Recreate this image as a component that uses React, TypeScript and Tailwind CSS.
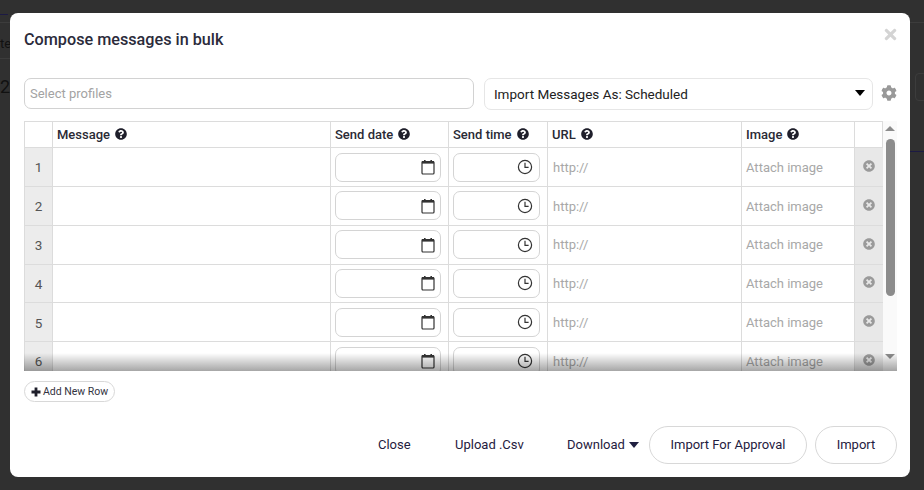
import { FaQuestionCircle, FaCog, FaTimes, FaTimesCircle } from "react-icons/fa";

const font = { fontFamily: 'Roboto, "Noto Sans", "Liberation Sans", sans-serif' };

function Help() {
  return <FaQuestionCircle className="ml-[5px] w-[12px] h-[12px] text-[#1f1f2b] -translate-y-[1px]" />;
}

function Caret({ className = "" }: { className?: string }) {
  return <span className={`inline-block w-0 h-0 border-x-[5px] border-x-transparent border-t-[6px] border-t-current ${className}`} />;
}

function Plus() {
  return (
    <svg width="10" height="10" viewBox="0 0 10 10" className="shrink-0 mr-[2px]">
      <path d="M3.6 0.5H6.4V3.6H9.5V6.4H6.4V9.5H3.6V6.4H0.5V3.6H3.6Z" fill="#1f1f2b" />
    </svg>
  );
}

function Calendar() {
  return (
    <svg width="14" height="16" viewBox="0 0 14 16" className="shrink-0">
      <rect x="1" y="2.5" width="12" height="12.5" rx="1" fill="#fff" stroke="#333" strokeWidth="1.2" />
      <rect x="1" y="2" width="12" height="2.6" fill="#333" />
      <rect x="3" y="1" width="1.6" height="2" fill="#333" />
      <rect x="9.4" y="1" width="1.6" height="2" fill="#333" />
    </svg>
  );
}

function Clock() {
  return (
    <svg width="16" height="16" viewBox="0 0 16 16" className="shrink-0">
      <circle cx="8" cy="8" r="6.6" fill="none" stroke="#333" strokeWidth="1.2" />
      <path d="M8 3.8V8.4H11.6" fill="none" stroke="#333" strokeWidth="1.2" />
    </svg>
  );
}

function HeadCell({ w, label }: { w: string; label: string }) {
  return (
    <div className={`${w} shrink-0 h-full border-r border-[#dcdcdc] pl-[4px] flex items-center text-[13px] font-medium text-[#2a2a35] whitespace-nowrap`}>
      {label}
      <Help />
    </div>
  );
}

function Row({ n }: { n: number }) {
  return (
    <div className="flex h-[38.8px] border-b border-[#dcdcdc] shrink-0">
      <div className="w-[28px] shrink-0 bg-[#ececec] border-r border-[#dcdcdc] flex items-center justify-center pt-[1px] text-[13.5px] text-[#555]">{n}</div>
      <div className="w-[278px] shrink-0 border-r border-[#dcdcdc]" />
      <div className="w-[118px] shrink-0 border-r border-[#dcdcdc] pl-[4px] flex items-center">
        <div className="w-[106px] h-[29px] border border-[#d4d4d4] rounded-[7px] flex items-center justify-end pr-[5px]">
          <Calendar />
        </div>
      </div>
      <div className="w-[99px] shrink-0 border-r border-[#dcdcdc] pl-[4px] flex items-center">
        <div className="w-[87px] h-[29px] border border-[#d4d4d4] rounded-[7px] flex items-center justify-end pr-[6px]">
          <Clock />
        </div>
      </div>
      <div className="w-[194px] shrink-0 border-r border-[#dcdcdc] pl-[5px] pt-[1px] flex items-center text-[13px] text-[#a8a8a8]">http://</div>
      <div className="w-[113px] shrink-0 border-r border-[#dcdcdc] pl-[4px] pt-[1px] flex items-center text-[13px] text-[#a8a8a8]">Attach image</div>
      <div className="w-[28px] shrink-0 bg-[#e8e8e8] flex items-center justify-center">
        <FaTimesCircle className="w-[12px] h-[12px] text-[#9a9a9a] -translate-y-[1px]" />
      </div>
    </div>
  );
}

export default function App() {
  return (
    <div className="relative w-[924px] h-[490px] overflow-hidden bg-[#303030] pt-[13px] pl-[10px]" style={font}>
      {/* page dimmed behind the dialog */}
      <div className="absolute left-0 top-[14px] w-[8px] h-px bg-[#1c1a44]" />
      <div className="absolute left-0 top-[22px] w-[10px] h-px bg-[#3c3c3c]" />
      <div className="absolute left-0 top-[58px] w-[10px] h-px bg-[#3c3c3c]" />
      <div className="absolute left-0 top-[36px] text-[13px] leading-[16px] text-[#111]">te</div>
      <div className="absolute left-0 top-[76px] text-[18px] leading-[22px] text-[#111] whitespace-nowrap">20</div>
      <div className="absolute left-[910px] top-[22px] w-[14px] h-px bg-[#3c3c3c]" />
      <div className="absolute left-[915px] top-[73px] w-[12px] h-[28px] rounded border border-[#3c3c3c]" />
      <div className="absolute left-[910px] top-[151px] w-[14px] h-px bg-[#1c1a44]" />

      <div className="relative w-[900px] h-[464px] bg-white rounded-[8px] flex flex-col pl-[14px] pr-[13px]">
        <div className="h-[65px] shrink-0 flex items-start justify-between">
          <h2 className="mt-[16px] text-[16.2px] leading-[22px] font-medium text-[#2b2b3b]">Compose messages in bulk</h2>
          <FaTimes className="mt-[13px] mr-[-1px] w-[15px] h-[17px] text-[#d4d4d4]" />
        </div>

        <div className="flex items-start h-[32px] shrink-0">
          <div className="w-[451px] h-[31px] border border-[#d2d2d2] rounded-[7px] flex items-center pl-[5px] text-[13px] text-[#a3a3a3]">Select profiles</div>
          <div className="ml-[10px] w-[390px] h-[32px] border border-[#e6e6e6] rounded-[7px] flex items-center justify-between pl-[9px] pr-[7px] pt-[1px] text-[13.5px] text-[#222]">
            Import Messages As: Scheduled
            <Caret className="text-black -translate-y-[2px]" />
          </div>
          <FaCog className="ml-[8px] mt-[7px] w-[16px] h-[16px] text-[#999]" />
        </div>

        <div className="relative mt-[11px] h-[250px] shrink-0 flex overflow-hidden">
          <div className="w-[859px] shrink-0 border-l border-t border-[#dcdcdc] flex flex-col">
            <div className="flex h-[26.2px] border-b border-[#dcdcdc] shrink-0">
              <div className="w-[28px] shrink-0 h-full border-r border-[#dcdcdc]" />
              <HeadCell w="w-[278px]" label="Message" />
              <HeadCell w="w-[118px]" label="Send date" />
              <HeadCell w="w-[99px]" label="Send time" />
              <HeadCell w="w-[194px]" label="URL" />
              <HeadCell w="w-[113px]" label="Image" />
              <div className="w-[28px] shrink-0 h-full border-r border-[#dcdcdc]" />
            </div>
            {[1, 2, 3, 4, 5, 6].map((n) => (
              <Row key={n} n={n} />
            ))}
          </div>
          <div className="w-[14px] shrink-0 bg-[#fafafa] flex flex-col items-center">
            <div className="mt-[5px] w-0 h-0 border-x-[5px] border-x-transparent border-b-[5px] border-b-[#8c8c8c]" />
            <div className="mt-[8px] w-[9px] h-[157px] rounded-[5px] bg-[#8c8c8c]" />
            <div className="mt-[58px] w-0 h-0 border-x-[5px] border-x-transparent border-t-[5px] border-t-[#8c8c8c]" />
          </div>
          <div className="absolute left-0 right-0 bottom-0 h-[18px] bg-gradient-to-b from-[#00000000] to-[#00000059]" />
        </div>

        <button className="mt-[10px] self-start h-[21px] w-[91px] border border-[#d8d8d8] rounded-full flex items-center justify-center text-[10.5px] text-[#33333f] whitespace-nowrap">
          <Plus />
          Add New Row
        </button>

        <div className="mt-[24px] flex items-center text-[13px] text-[#1f2040] whitespace-nowrap">
          <span className="ml-[354px] w-[32px]">Close</span>
          <span className="ml-[45px] w-[68px]">Upload .Csv</span>
          <span className="ml-[44px] w-[73px] flex items-center">
            Download
            <Caret className="ml-[4px]" />
          </span>
          <button className="ml-[9px] w-[158px] h-[38px] border border-[#d8d8d8] rounded-full">Import For Approval</button>
          <button className="ml-[8px] w-[82px] h-[38px] border border-[#d8d8d8] rounded-full">Import</button>
        </div>
      </div>
    </div>
  );
}
